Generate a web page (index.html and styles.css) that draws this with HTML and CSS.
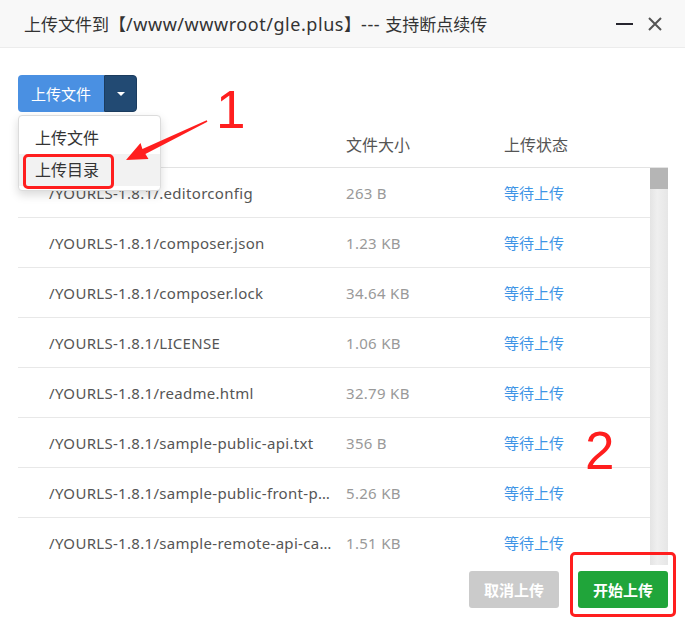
FILE: index.html
```html
<!DOCTYPE html>
<html lang="zh-CN">
<head>
<meta charset="utf-8">
<title>上传文件</title>
<link rel="stylesheet" href="styles.css">
</head>
<body>
<div class="dialog">
  <div class="titlebar">
    <div class="title">上传文件到【<span class="lat">/www/wwwroot/gle.plus</span>】<span class="lat">--- </span>支持断点续传</div>
    <div class="win-ctrls">
      <span class="ctrl-min"></span>
      <svg class="ctrl-close" width="16" height="16" viewBox="0 0 16 16"><path d="M2 2L14 14M14 2L2 14" stroke="#555" stroke-width="2" fill="none"/></svg>
    </div>
  </div>
  <div class="content">
    <div class="toolbar">
      <div class="btn-group">
        <span class="btn-main">上传文件</span>
        <span class="btn-caret"><i class="caret"></i></span>
        <div class="menu">
          <div class="menu-item">上传文件</div>
          <div class="menu-item active">上传目录</div>
        </div>
      </div>
    </div>
    <div class="thead">
      <div class="cell c-name"></div>
      <div class="cell c-size">文件大小</div>
      <div class="cell c-state">上传状态</div>
    </div>
    <div class="tbody">
      <div class="rows">
        <div class="row"><div class="cell c-name">/YOURLS-1.8.1/.editorconfig</div><div class="cell c-size">263 B</div><div class="cell c-state">等待上传</div></div>
        <div class="row"><div class="cell c-name">/YOURLS-1.8.1/composer.json</div><div class="cell c-size">1.23 KB</div><div class="cell c-state">等待上传</div></div>
        <div class="row"><div class="cell c-name">/YOURLS-1.8.1/composer.lock</div><div class="cell c-size">34.64 KB</div><div class="cell c-state">等待上传</div></div>
        <div class="row"><div class="cell c-name">/YOURLS-1.8.1/LICENSE</div><div class="cell c-size">1.06 KB</div><div class="cell c-state">等待上传</div></div>
        <div class="row"><div class="cell c-name">/YOURLS-1.8.1/readme.html</div><div class="cell c-size">32.79 KB</div><div class="cell c-state">等待上传</div></div>
        <div class="row"><div class="cell c-name">/YOURLS-1.8.1/sample-public-api.txt</div><div class="cell c-size">356 B</div><div class="cell c-state">等待上传</div></div>
        <div class="row"><div class="cell c-name">/YOURLS-1.8.1/sample-public-front-page.txt</div><div class="cell c-size">5.26 KB</div><div class="cell c-state">等待上传</div></div>
        <div class="row"><div class="cell c-name">/YOURLS-1.8.1/sample-remote-api-call.txt</div><div class="cell c-size">1.51 KB</div><div class="cell c-state">等待上传</div></div>
      </div>
      <div class="scrollbar"><div class="thumb"></div></div>
    </div>
    <div class="footer">
      <span class="btn btn-cancel">取消上传</span>
      <span class="btn btn-start">开始上传</span>
    </div>
  </div>

  <div class="mark mark-dir"></div>
  <div class="mark mark-start"></div>
  <svg class="arrow" width="685" height="622" viewBox="0 0 685 622"><polygon points="126,160 140.5,143 142.4,149 206.7,120.2 207.4,121.8 145.4,154 148.5,159" fill="#ff1e1e"/></svg>
  <div class="num num-1">1</div>
  <div class="num num-2">2</div>
</div>
</body>
</html>
```

FILE: styles.css
```css
* { box-sizing: border-box; }
html, body { margin: 0; padding: 0; background: #fff; }
body {
  font-family: "Noto Sans", "Noto Sans CJK SC", sans-serif;
  color: #333;
}
.dialog {
  position: relative;
  width: 685px;
  height: 622px;
  overflow: hidden;
  background: #fff;
}
.titlebar {
  height: 48px;
  background: #f8f8f8;
  border-bottom: 1px solid #ececec;
  display: flex;
  align-items: center;
  padding-left: 24px;
  padding-right: 22px;
}
.title {
  flex: 1;
  font-size: 17px;
  color: #333;
  white-space: nowrap;
}
.title .lat {
  font-size: 18px;
  letter-spacing: 0.55px;
}
.win-ctrls {
  display: flex;
  align-items: center;
  gap: 14px;
}
.ctrl-min {
  display: block;
  width: 17px;
  height: 2px;
  background: #26252e;
}
.ctrl-close { display: block; }

.content {
  padding: 0 17px 0 18px;
}
.toolbar {
  padding-top: 27px;
  height: 64px;
}
.btn-group {
  position: relative;
  display: inline-flex;
  height: 37px;
}
.btn-main {
  width: 86px;
  background: #4a90e2;
  color: #fff;
  font-size: 15px;
  display: flex;
  align-items: center;
  justify-content: center;
  border-radius: 4px 0 0 4px;
}
.btn-caret {
  width: 33px;
  background: #224a73;
  border: 1px solid #1b3c5f;
  border-radius: 0 4px 4px 0;
  display: flex;
  align-items: center;
  justify-content: center;
}
.caret {
  width: 0;
  height: 0;
  border-left: 4.5px solid transparent;
  border-right: 4.5px solid transparent;
  border-top: 4.5px solid #fff;
}
.menu {
  position: absolute;
  top: 40px;
  left: 0;
  width: 143px;
  padding: 6px 0 4px;
  background: #fff;
  border: 1px solid #dcdcdc;
  border-radius: 4px;
  box-shadow: 0 4px 10px rgba(0,0,0,0.15);
  z-index: 5;
}
.menu-item {
  height: 32px;
  line-height: 32px;
  padding-left: 16px;
  font-size: 16px;
  color: #333;
}
.menu-item.active { background: #f2f2f2; }

.thead {
  margin-top: 9px;
  height: 47px;
  border-bottom: 1px solid #e3e3e3;
  display: grid;
  grid-template-columns: 321px 158px 1fr;
  align-items: center;
  font-size: 16px;
  color: #555;
}
.cell {
  white-space: nowrap;
  overflow: hidden;
  text-overflow: ellipsis;
}
.c-name { padding-left: 31px; padding-right: 5px; }
.c-size { padding-left: 7px; }
.c-state { padding-left: 7px; }

.tbody {
  display: flex;
  height: 397px;
}
.rows {
  flex: 1;
  overflow: hidden;
}
.row {
  height: 50px;
  border-bottom: 1px solid #e8e8e8;
  display: grid;
  grid-template-columns: 321px 158px 1fr;
  align-items: center;
  font-size: 15px;
  letter-spacing: 0.3px;
}
.row .c-name { color: #555; }
.row .c-size { color: #999; }
.row .c-state { color: #3f95e6; letter-spacing: 0; }
.scrollbar {
  width: 18px;
  background: linear-gradient(to right, #e4e4e4, #efefef 40%, #e6e6e6);
}
.thumb {
  height: 21px;
  background: #b5b5b5;
}

.footer {
  display: flex;
  justify-content: flex-end;
  gap: 19px;
  margin-top: 6px;
}
.btn {
  width: 90px;
  height: 37px;
  border-radius: 3px;
  color: #fff;
  font-weight: bold;
  font-size: 15px;
  display: flex;
  align-items: center;
  justify-content: center;
}
.btn-cancel { background: #cbcbcb; }
.btn-start { background: #20a53a; }

.mark {
  position: absolute;
  border: 3px solid #ff1e1e;
  border-radius: 5px;
  z-index: 10;
}
.mark-dir { left: 23px; top: 154px; width: 91px; height: 35px; }
.mark-start { left: 570px; top: 552px; width: 106px; height: 65px; }
.arrow {
  position: absolute;
  left: 0;
  top: 0;
  z-index: 10;
}
.num {
  position: absolute;
  z-index: 10;
  font-family: "Liberation Sans", Arial, sans-serif;
  font-size: 53px;
  line-height: 53px;
  color: #ff1e1e;
}
.num-1 { left: 216px; top: 83px; }
.num-2 { left: 585px; top: 424px; }
```
